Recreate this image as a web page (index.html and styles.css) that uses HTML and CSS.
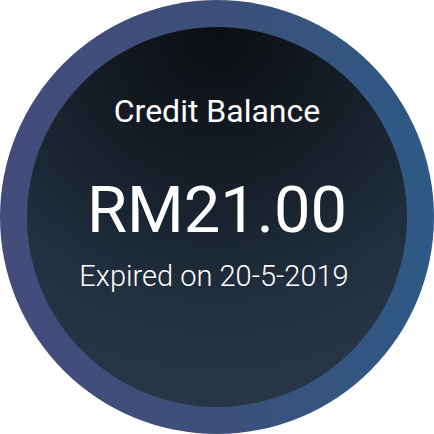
FILE: index.html
```html
<!DOCTYPE html>
<html>
<head>
<meta charset="utf-8">
<link rel="stylesheet" href="styles.css">
</head>
<body>
<div class="ring">
  <div class="disc">
    <div class="title">Credit Balance</div>
    <div class="amount">RM21.00</div>
    <div class="expiry">Expired on 20-5-2019</div>
  </div>
</div>
</body>
</html>
```
FILE: styles.css
```css
html, body {
  margin: 0;
  padding: 0;
  background: #ffffff;
}
body {
  width: 434px;
  height: 434px;
  overflow: hidden;
  font-family: Roboto, "Noto Sans", sans-serif;
}
.ring {
  width: 434px;
  height: 434px;
  box-sizing: border-box;
  padding: 27px;
  border-radius: 50%;
  background: linear-gradient(90deg, #444b7b 0%, #3c5079 50%, #2e5986 100%);
}
.disc {
  width: 380px;
  height: 380px;
  box-sizing: border-box;
  border-radius: 50%;
  background: radial-gradient(circle at 50% 2%, #0b0e12 0%, #161e28 35%, #222f3f 65%, #2a394b 100%);
  display: flex;
  flex-direction: column;
  align-items: center;
  padding-top: 68px;
  color: #ffffff;
}
.title {
  font-size: 32px;
  line-height: 32px;
  font-weight: 400;
}
.amount {
  margin-top: 51px;
  font-size: 65px;
  line-height: 65px;
  font-weight: 400;
}
.expiry {
  margin-top: 19px;
  margin-right: 6px;
  font-size: 29px;
  line-height: 29px;
  font-weight: 300;
}
```
